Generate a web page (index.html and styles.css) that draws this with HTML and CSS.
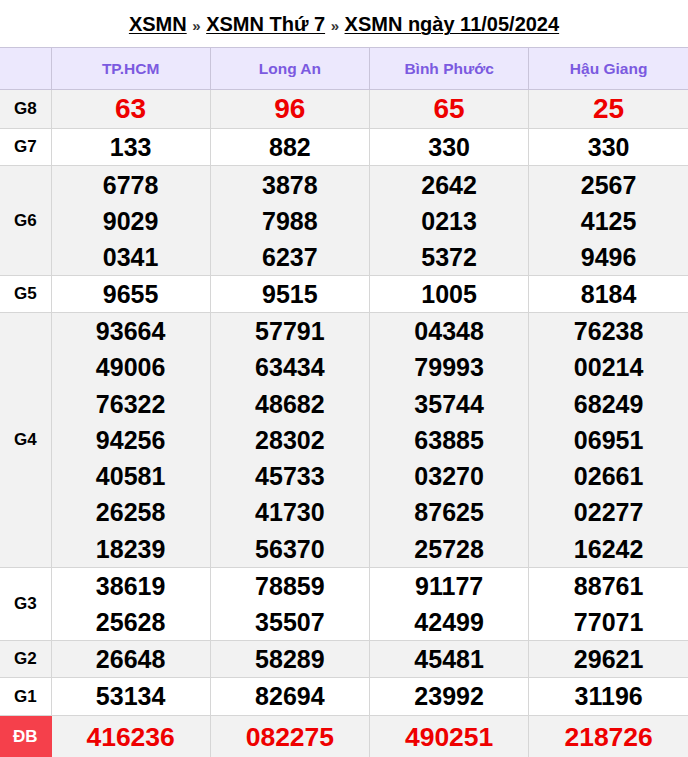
FILE: index.html
```html
<!DOCTYPE html>
<html lang="vi">
<head>
<meta charset="utf-8">
<title>XSMN ngày 11/05/2024</title>
<link rel="stylesheet" href="styles.css">
</head>
<body>
<div class="page">
  <h1 class="title"><a href="#">XSMN</a> <span class="sep">»</span> <a href="#">XSMN Thứ 7</a> <span class="sep">»</span> <a href="#">XSMN ngày 11/05/2024</a></h1>
  <table class="kq">
    <colgroup><col class="c-label"><col class="c-prov"><col class="c-prov"><col class="c-prov"><col class="c-prov"></colgroup>
    <thead>
      <tr class="head"><th></th><th>TP.HCM</th><th>Long An</th><th>Bình Phước</th><th>Hậu Giang</th></tr>
    </thead>
    <tbody>
      <tr class="alt g8"><td class="lbl">G8</td><td><div>63</div></td><td><div>96</div></td><td><div>65</div></td><td><div>25</div></td></tr>
      <tr class="g7"><td class="lbl">G7</td><td><div>133</div></td><td><div>882</div></td><td><div>330</div></td><td><div>330</div></td></tr>
      <tr class="alt g6"><td class="lbl">G6</td>
        <td><div>6778</div><div>9029</div><div>0341</div></td>
        <td><div>3878</div><div>7988</div><div>6237</div></td>
        <td><div>2642</div><div>0213</div><div>5372</div></td>
        <td><div>2567</div><div>4125</div><div>9496</div></td></tr>
      <tr class="g5"><td class="lbl">G5</td><td><div>9655</div></td><td><div>9515</div></td><td><div>1005</div></td><td><div>8184</div></td></tr>
      <tr class="alt g4"><td class="lbl">G4</td>
        <td><div>93664</div><div>49006</div><div>76322</div><div>94256</div><div>40581</div><div>26258</div><div>18239</div></td>
        <td><div>57791</div><div>63434</div><div>48682</div><div>28302</div><div>45733</div><div>41730</div><div>56370</div></td>
        <td><div>04348</div><div>79993</div><div>35744</div><div>63885</div><div>03270</div><div>87625</div><div>25728</div></td>
        <td><div>76238</div><div>00214</div><div>68249</div><div>06951</div><div>02661</div><div>02277</div><div>16242</div></td></tr>
      <tr class="g3"><td class="lbl">G3</td>
        <td><div>38619</div><div>25628</div></td>
        <td><div>78859</div><div>35507</div></td>
        <td><div>91177</div><div>42499</div></td>
        <td><div>88761</div><div>77071</div></td></tr>
      <tr class="alt g2"><td class="lbl">G2</td><td><div>26648</div></td><td><div>58289</div></td><td><div>45481</div></td><td><div>29621</div></td></tr>
      <tr class="g1"><td class="lbl">G1</td><td><div>53134</div></td><td><div>82694</div></td><td><div>23992</div></td><td><div>31196</div></td></tr>
      <tr class="alt db"><td class="lbl">ĐB</td><td><div>416236</div></td><td><div>082275</div></td><td><div>490251</div></td><td><div>218726</div></td></tr>
    </tbody>
  </table>
</div>
</body>
</html>
```
FILE: styles.css
```css
html, body {
  margin: 0;
  padding: 0;
  background: #ffffff;
}
body {
  font-family: "Liberation Sans", Arial, Helvetica, sans-serif;
  color: #000;
}
.page {
  width: 688px;
}
.title {
  margin: 0;
  height: 47px;
  line-height: 49px;
  text-align: center;
  font-size: 20px;
  font-weight: bold;
}
.title a {
  color: #000;
  text-decoration: underline;
  text-decoration-thickness: 1px;
  text-underline-offset: 2px;
}
.title .sep {
  color: #333;
  font-size: 15px;
}
.kq {
  width: 688px;
  border-collapse: collapse;
  table-layout: fixed;
}
.c-label { width: 51px; }
.kq th, .kq td {
  border: 1px solid #d6d6d6;
  text-align: center;
  padding: 0;
  vertical-align: middle;
}
.kq tr > :first-child { border-left: none; }
.kq tr > :last-child { border-right: none; }
.head th {
  background: #ece8fd;
  color: #7b5ae0;
  font-size: 15.5px;
  font-weight: bold;
  height: 41px;
  border-color: #c9c4da;
}
.kq td div {
  font-size: 25px;
  font-weight: bold;
  line-height: 36px;
}
.alt td { background: #f2f2f2; }
.lbl {
  font-size: 17px;
  font-weight: bold;
}
.g8 td div {
  font-size: 28px;
  color: #ee0000;
  line-height: 38px;
}
.g6 td div:first-child { padding-top: 1px; }
.g4 td div { line-height: 36.3px; }
.g1 td div { line-height: 37px; }
.db td div {
  font-size: 26.5px;
  color: #ee0000;
  line-height: 42px;
}
.db .lbl {
  background: #f5404b;
  color: #ffffff;
  border-color: #f5404b;
}
```
